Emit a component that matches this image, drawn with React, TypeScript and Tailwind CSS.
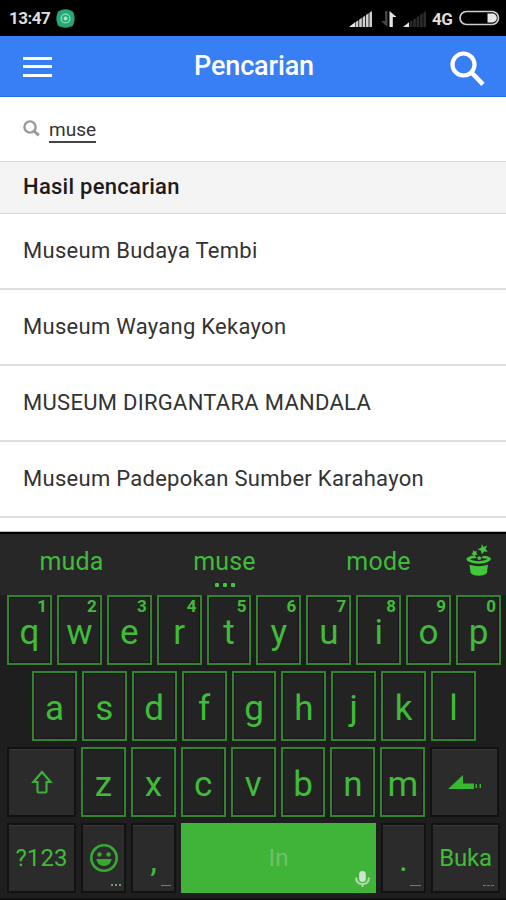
import type { ReactNode } from "react";
import clsx from "clsx";

const results = [
  "Museum Budaya Tembi",
  "Museum Wayang Kekayon",
  "MUSEUM DIRGANTARA MANDALA",
  "Museum Padepokan Sumber Karahayon",
];

const topRow = ["q", "w", "e", "r", "t", "y", "u", "i", "o", "p"];
const homeRow = ["a", "s", "d", "f", "g", "h", "j", "k", "l"];
const bottomRow = ["z", "x", "c", "v", "b", "n", "m"];

function Signal({ weak = false }: { weak?: boolean }) {
  const rest = weak ? "#2b2b2b" : "#d0d0d0";
  return (
    <svg width="24" height="16" viewBox="0 0 24 16">
      <path d="M0 16L6 11.3V16Z" fill="#e8e8e8" />
      <path d="M6.6 11L9.4 9.2V16H6.6Z" fill={rest} />
      <path d="M10.2 8.6L12.8 6.9V16H10.2Z" fill={rest} />
      <path d="M13.6 6.4L16.2 4.6V16H13.6Z" fill={rest} />
      <path d="M17 4.1L19.6 2.3V16H17Z" fill={rest} />
      <path d="M20.4 1.8L23 0V16H20.4Z" fill={rest} />
    </svg>
  );
}

function StatusBar() {
  return (
    <div className="flex h-9 items-center bg-black pl-[9px] pr-[6px] text-[#dedede]">
      <span className="mt-px text-[17px] font-bold leading-none tracking-[-0.5px]">13:47</span>
      <svg className="ml-[6px]" width="19" height="19" viewBox="0 0 19 19">
        <path
          d="M5 1.2Q9.5-.5 14 1.2Q17.4 1.6 17.8 5Q19.5 9.5 17.8 14Q17.4 17.4 14 17.8Q9.5 19.5 5 17.8Q1.6 17.4 1.2 14Q-.5 9.5 1.2 5Q1.6 1.6 5 1.2Z"
          fill="#25a875"
        />
        <circle cx="9.5" cy="9.5" r="4.4" fill="none" stroke="#8fdcbc" strokeWidth="1.3" />
        <circle cx="9.5" cy="9.5" r="2" fill="#a5e4ca" />
      </svg>
      <div className="ml-auto mt-[2px] flex items-center">
        <Signal />
        <svg className="ml-[7px] mr-[6px]" width="17" height="16" viewBox="0 0 17 16">
          <path d="M5 0H7.5V16L1 10H5Z" fill="#444" />
          <path d="M9.5 0L16.5 6H12.8V16H9.5Z" fill="#e4e4e4" />
        </svg>
        <Signal weak />
        <span className="ml-[5px] w-[21px] text-[17px] font-bold leading-none tracking-[-0.6px]">4G</span>
        <svg className="-mt-[2px] ml-[6px]" width="41" height="16" viewBox="0 0 41 16">
          <rect x="1" y="1.5" width="38.5" height="13" rx="6.5" fill="none" stroke="#cfcfcf" strokeWidth="1.7" />
          <path d="M28.5 3.6H33.5A4.4 4.4 0 0 1 33.5 12.4H28.5Z" fill="#e8e8e8" />
        </svg>
      </div>
    </div>
  );
}

function Header() {
  return (
    <header className="flex h-[61px] items-center border-b border-[#1c6fe8] bg-[#387ef5] pl-[23px] pr-[21px] text-white">
      <div className="mt-[1px] flex w-[29px] flex-col gap-[5.5px]">
        <span className="h-[3px] bg-white" />
        <span className="h-[3px] bg-white" />
        <span className="h-[3px] bg-white" />
      </div>
      <h1 className="flex-1 pl-[6px] text-center text-[27px] font-medium leading-none tracking-[-0.15px]">Pencarian</h1>
      <svg className="mt-[4px]" width="35" height="35" viewBox="0 0 35 35" fill="none" stroke="#fff" strokeWidth="4.2">
        <circle cx="13.5" cy="13.5" r="11" />
        <path d="M21 21L33 33.4" strokeWidth="4.6" />
      </svg>
    </header>
  );
}

function Key({ children, hint }: { children: ReactNode; hint?: number }) {
  return (
    <div className="relative flex h-[70px] w-[44.9px] items-center justify-center border-2 border-[#33842f] bg-[#232323] pt-[5px] text-[#40bb3a] shadow-[inset_0_0_0_1px_#1c141f]">
      <span className="text-[35px] leading-[24px]">{children}</span>
      {hint !== undefined && (
        <span className="absolute right-[3px] top-[2px] text-[17px] font-bold leading-[14px]">{hint}</span>
      )}
    </div>
  );
}

function DarkKey({ children, className }: { children: ReactNode; className: string }) {
  return (
    <div
      className={clsx(
        "relative flex h-[70px] items-center justify-center border-2 border-[#121212] bg-[#2b2b2b] text-[#40bb3a] shadow-[inset_0_1px_0_#383838]",
        className,
      )}
    >
      {children}
    </div>
  );
}

function MagicHat() {
  return (
    <svg width="27" height="34" viewBox="0 0 28 36" fill="#42c63b">
      <path d="M17.5 1L19.3 4.2L23.3 2.6L21.4 6.2L23.8 9.3L20 9L17.6 12L16.6 8.2L13 6.7L16.8 5Z" />
      <path d="M8.4 7.6L10.2 9L12.3 8.4L11.7 10.6L13 12.4L10.7 12.6L9.4 14.5L8.4 12.4L6.2 12L7.9 10.4Z" />
      <circle cx="14.8" cy="16" r="2" />
      <path
        fillRule="evenodd"
        d="M1.5 16Q5 13 10 13.3L12 16H17L19 13.4Q24 13.4 27 16Q28 19.8 19.5 21.4Q14 22.4 8 21.3Q0 19.5 1.5 16ZM5 17Q8 19.2 14 19.2Q20 19.2 24 17Q20 16 14 16Q8 16 5 17Z"
      />
      <path d="M4.5 23Q14 26 24 23L23 31.5Q21 34.6 14.3 34.6Q7.5 34.6 5.6 31.5Z" />
    </svg>
  );
}

function Keyboard() {
  return (
    <div className="h-[369px] border-b-2 border-t border-b-[#111] border-t-[#b5b5b5] bg-[#1e1e1e] text-[#40bb3a]">
      <div className="relative flex h-[63px] border-t-2 border-black bg-[#272727] pt-[15px] text-[25px] leading-[26px] tracking-[0.2px]">
        <span className="w-[143px] text-center">muda</span>
        <span className="w-[163px] text-center">muse</span>
        <span className="w-[145px] text-center">mode</span>
        <div className="-mt-[6px] ml-[14px]">
          <MagicHat />
        </div>
        <div className="absolute bottom-[8px] left-[215px] flex gap-[4px]">
          <span className="size-[4px] rounded-[1px] bg-[#42c63b]" />
          <span className="size-[4px] rounded-[1px] bg-[#42c63b]" />
          <span className="size-[4px] rounded-[1px] bg-[#42c63b]" />
        </div>
      </div>
      <div className="flex flex-col gap-[6px]">
        <div className="flex gap-[5px] pl-[7px]">
          {topRow.map((letter, i) => (
            <Key key={letter} hint={(i + 1) % 10}>
              {letter}
            </Key>
          ))}
        </div>
        <div className="flex gap-[5px] pl-[32px]">
          {homeRow.map((letter) => (
            <Key key={letter}>{letter}</Key>
          ))}
        </div>
        <div className="flex gap-[5px] pl-[7px]">
          <DarkKey className="w-[69px]">
            <svg className="mt-[-1px]" width="22" height="24" viewBox="0 0 22 24" fill="none" stroke="#3bb235" strokeWidth="2.2">
              <path d="M11 2L19.5 12H15.5V21.3Q15.5 22.5 14.3 22.5H7.7Q6.5 22.5 6.5 21.3V12H2.5Z" />
            </svg>
          </DarkKey>
          {bottomRow.map((letter) => (
            <Key key={letter}>{letter}</Key>
          ))}
          <DarkKey className="w-[69px]">
            <svg width="34" height="14" viewBox="0 0 34 14" fill="#36b830">
              <path d="M0 14L15 0V8.5H26V14Z" />
              <path d="M27.5 9H29V13H27.5ZM31.5 9H33V13H31.5Z" />
            </svg>
          </DarkKey>
        </div>
        <div className="flex gap-[5px] pl-[7px]">
          <DarkKey className="w-[69px] text-[24px] tracking-[0.1px]">?123</DarkKey>
          <DarkKey className="w-[45px]">
            <svg width="30" height="30" viewBox="0 0 30 30">
              <circle cx="15" cy="15" r="12.7" fill="none" stroke="#36a931" strokeWidth="2.6" />
              <circle cx="10.5" cy="11.5" r="2.2" fill="#36a931" />
              <circle cx="19.5" cy="11.5" r="2.2" fill="#36a931" />
              <path d="M7.3 16H22.7Q21.5 23 15 23Q8.5 23 7.3 16Z" fill="#36a931" />
            </svg>
            <div className="absolute bottom-[5px] right-[3px] flex gap-[2px]">
              <span className="size-[2px] bg-[#709a70]" />
              <span className="size-[2px] bg-[#709a70]" />
              <span className="size-[2px] bg-[#709a70]" />
            </div>
          </DarkKey>
          <DarkKey className="w-[45px] pt-[5px] text-[34px]">
            ,
            <span className="absolute bottom-[5px] right-[3px] h-[1px] w-[10px] bg-[#36a931]" />
          </DarkKey>
          <div className="relative flex h-[70px] w-[195px] items-center justify-center bg-[#40b438] text-[24px] text-[#72c06b]">
            In
            <svg className="absolute bottom-[5px] right-[6px]" width="15" height="17" viewBox="0 0 15 17">
              <rect x="4.2" y="0" width="6.6" height="11" rx="3.3" fill="#d4e2d2" />
              <path d="M1.2 6.5Q1.2 13 7.5 13Q13.8 13 13.8 6.5M7.5 13V16" fill="none" stroke="#b9d7b5" strokeWidth="2" />
            </svg>
          </div>
          <DarkKey className="w-[45px] pt-[3px] text-[34px]">
            .
            <span className="absolute bottom-[5px] right-[3px] h-[1px] w-[11px] bg-[#36a931]" />
          </DarkKey>
          <DarkKey className="w-[69px] text-[24px] tracking-[-0.2px]">
            Buka
            <div className="absolute bottom-[5px] right-[4px] flex gap-[1px]">
              <span className="h-[1px] w-[3px] bg-[#36a931]" />
              <span className="h-[1px] w-[3px] bg-[#36a931]" />
              <span className="h-[1px] w-[3px] bg-[#36a931]" />
            </div>
          </DarkKey>
        </div>
      </div>
    </div>
  );
}

export default function App() {
  return (
    <div className="flex h-[900px] w-[506px] flex-col overflow-hidden bg-white font-['Roboto',sans-serif]">
      <StatusBar />
      <Header />
      <div className="flex h-[64px] items-center pl-[23px]">
        <svg className="-mt-[2px]" width="17" height="17" viewBox="0 0 17 17" fill="none" stroke="#9a9a9a" strokeWidth="2.4">
          <circle cx="7" cy="7" r="5.6" />
          <path d="M11 11L15.8 15.4" strokeWidth="3" />
        </svg>
        <span className="ml-[9px] mt-[4px] border-b-2 border-[#444] text-[19px] leading-[22px] text-[#333]">
          muse
        </span>
      </div>
      <h2 className="flex h-[53px] items-center border-y border-[#d6d6d6] bg-[#f4f4f4] pb-[2px] pl-[23px] text-[22px] font-medium tracking-[0.27px] text-[#1c1c1c]">
        Hasil pencarian
      </h2>
      <ul className="h-[317px]">
        {results.map((result) => (
          <li
            key={result}
            className="flex h-[76px] items-center whitespace-nowrap border-b-2 border-[#dedede] pb-[2px] pl-[23px] text-[22px] tracking-[0.28px] text-[#333]"
          >
            {result}
          </li>
        ))}
      </ul>
      <Keyboard />
    </div>
  );
}
